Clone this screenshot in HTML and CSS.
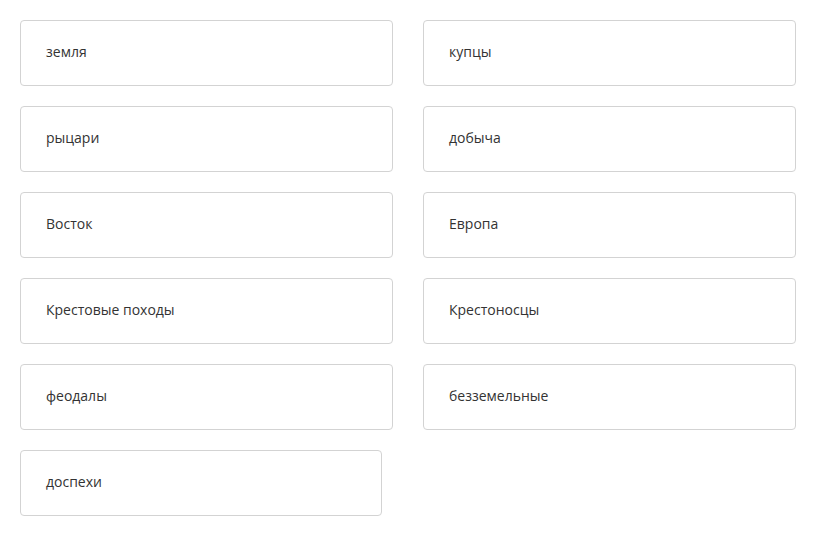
FILE: index.html
```html
<!DOCTYPE html>
<html lang="ru">
<head>
<meta charset="utf-8">
<link rel="stylesheet" href="styles.css">
</head>
<body>
<div class="grid">
  <div class="card">земля</div>
  <div class="card">купцы</div>
  <div class="card">рыцари</div>
  <div class="card">добыча</div>
  <div class="card">Восток</div>
  <div class="card">Европа</div>
  <div class="card">Крестовые походы</div>
  <div class="card">Крестоносцы</div>
  <div class="card">феодалы</div>
  <div class="card">безземельные</div>
  <div class="card card-short">доспехи</div>
</div>
</body>
</html>
```

FILE: styles.css
```css
html, body {
  margin: 0;
  padding: 0;
  background: #ffffff;
}
body {
  font-family: "Open Sans", "Noto Sans", sans-serif;
  font-size: 14px;
  color: #333333;
}
.grid {
  display: grid;
  grid-template-columns: 373px 373px;
  column-gap: 30px;
  row-gap: 20px;
  padding: 20px;
  align-items: start;
}
.card {
  box-sizing: border-box;
  height: 66px;
  border: 1px solid #d3d3d3;
  border-radius: 4px;
  padding: 0 25px 4px;
  display: flex;
  align-items: center;
}
.card-short {
  width: 362px;
}
```
